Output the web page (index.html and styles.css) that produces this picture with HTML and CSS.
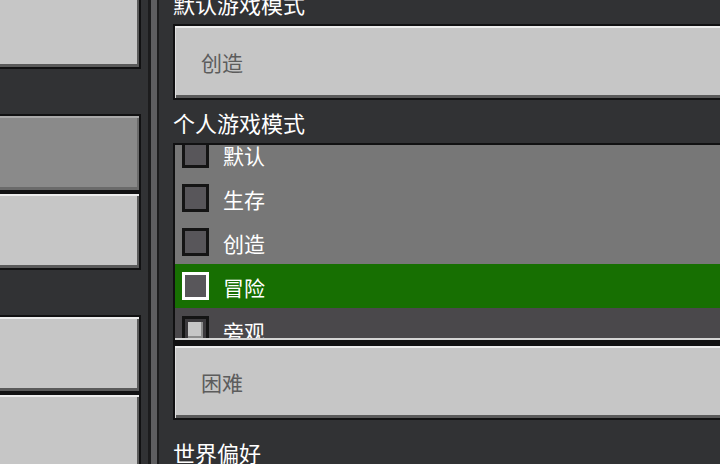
FILE: index.html
```html
<!DOCTYPE HTML>
<html>
<head>
    <meta name="viewport" content="width = device-width, user-scalable=0">
    <title>世界设置</title>
    <link rel="stylesheet" href="styles.css">
</head>
<body>
<div class="page">
    <div class="side">
        <div class="group first">
            <div class="side-button"></div>
        </div>
        <div class="group">
            <div class="side-button selected"></div>
            <div class="side-button"></div>
        </div>
        <div class="group">
            <div class="side-button"></div>
            <div class="side-button"></div>
        </div>
    </div>
    <div class="divider"></div>
    <div class="panel">
        <div class="panel-body">
            <div class="label top">默认游戏模式</div>
            <div class="dropdown">创造</div>

            <div class="label">个人游戏模式</div>
            <div class="list">
                <div class="list-view">
                    <div class="rows">
                        <div class="row"><span class="check"></span>默认</div>
                        <div class="row"><span class="check"></span>生存</div>
                        <div class="row"><span class="check"></span>创造</div>
                        <div class="row active"><span class="check"></span>冒险</div>
                        <div class="row dim"><span class="check on"><span class="knob"></span></span>旁观</div>
                    </div>
                </div>
            </div>
            <div class="dropdown">困难</div>

            <div class="label section">世界偏好</div>
        </div>
    </div>
</div>
</body>
</html>
```

FILE: styles.css
```css
body, html {
    background-color: #313234;
    width: 100%;
    height: 100%;
    padding: 0;
    margin: 0;
    overflow: hidden;
    color: #ffffff;
    font-family: "Noto Sans CJK SC", "Noto Sans", sans-serif;
}

.page {
    display: flex;
    height: 464px;
}

/* left column of menu buttons, cut off at the window edge */
.side {
    flex: 0 0 141px;
    overflow: hidden;
}

.group {
    margin-top: 45px;
}

.group.first {
    margin-top: -9px;
}

.side-button {
    box-sizing: border-box;
    height: 78px;
    margin-left: -12px;
    background-color: #c6c6c6;
    border: 2px solid #111112;
    box-shadow: inset 0 2px #ececec, inset -2px -3px #5a5a5a;
}

.side-button.selected {
    background-color: #8a8a8a;
    box-shadow: inset 0 2px #a9a9a9, inset -2px -3px #6a6a6a;
}

.divider {
    flex: 0 0 6px;
    margin-left: 7px;
    background-color: #5e5e60;
    border-left: 3px solid #1c1c1d;
    border-right: 2px solid #1c1c1d;
}

.panel {
    flex: 1;
    overflow: hidden;
    padding-left: 14px;
}

.panel-body {
    width: 620px;
    margin-top: -8px;
}

.label {
    height: 22px;
    font-size: 22px;
    line-height: 22px;
    margin-top: 11px;
    margin-bottom: 10px;
    white-space: nowrap;
}

.label.top {
    margin-top: 0;
}

.label.section {
    margin-top: 21px;
}

.dropdown {
    box-sizing: border-box;
    height: 76px;
    display: flex;
    align-items: center;
    padding-left: 26px;
    font-size: 21px;
    color: #5c5c5c;
    background-color: #c6c6c6;
    border: 2px solid #111112;
    box-shadow: inset 0 2px #ececec, inset 1px 0 #dedede, inset 0 -3px #5a5a5a;
}

/* scrolling list of game modes */
.list {
    box-sizing: border-box;
    height: 201px;
    border: 2px solid #111112;
    border-bottom-width: 4px;
    background-color: #777777;
}

.list-view {
    height: 193px;
    overflow: hidden;
    border-bottom: 2px solid #d4d4d4;
}

.rows {
    margin-top: -13px;
}

.row {
    height: 44px;
    display: flex;
    align-items: center;
    padding-left: 7px;
    padding-top: 2px;
    box-sizing: border-box;
    font-size: 21px;
    background-color: #777777;
}

.row.active {
    background-color: #176f02;
}

.row.dim {
    background-color: #4a484b;
}

.check {
    box-sizing: border-box;
    width: 27px;
    height: 28px;
    margin-right: 14px;
    margin-top: -2px;
    background-color: #58565a;
    border: 3px solid #141414;
    display: flex;
    align-items: center;
    justify-content: center;
}

.row.active .check {
    border-color: #ffffff;
}

.check.on {
    background-color: #3c3a3d;
}

.knob {
    width: 15px;
    height: 16px;
    background-color: #c6c6c6;
    box-shadow: inset -2px -2px #8b8b8b;
}
```
